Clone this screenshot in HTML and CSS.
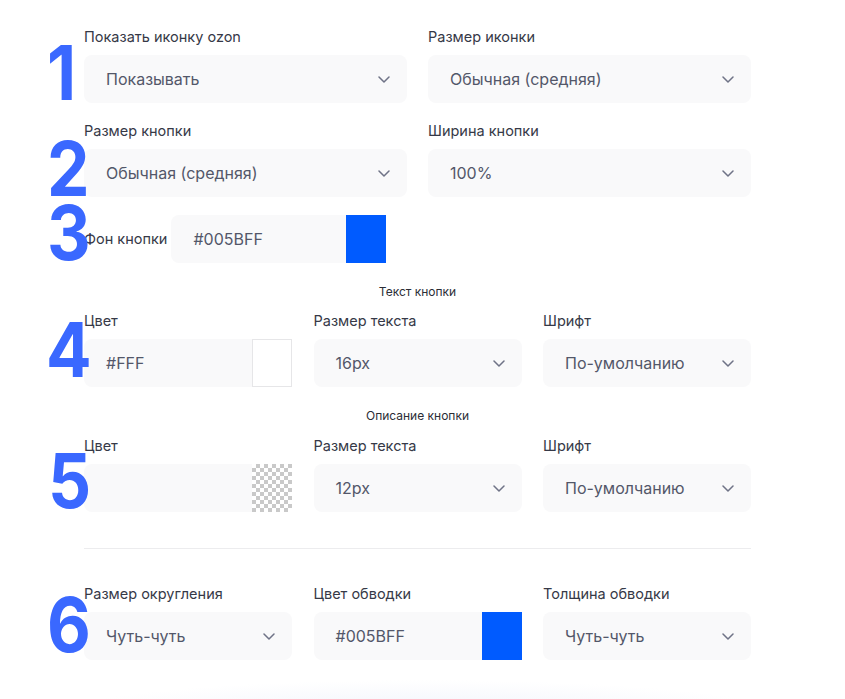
FILE: index.html
```html
<!DOCTYPE html>
<html lang="ru">
<head>
<meta charset="utf-8">
<link rel="stylesheet" href="styles.css">
</head>
<body>
<div class="page">
  <span class="num n1">1</span>
  <span class="num n2">2</span>
  <span class="num n3">3</span>
  <span class="num n4">4</span>
  <span class="num n5">5</span>
  <span class="num n6">6</span>

  <div class="grid2">
    <div class="field">
      <div class="label">Показать иконку ozon</div>
      <div class="select"><span>Показывать</span><svg class="chev" width="12" height="7" viewBox="0 0 12 7"><path d="M1 1l5 5 5-5" fill="none" stroke="#6f7386" stroke-width="1.5" stroke-linecap="round" stroke-linejoin="round"/></svg></div>
    </div>
    <div class="field">
      <div class="label">Размер иконки</div>
      <div class="select"><span>Обычная (средняя)</span><svg class="chev" width="12" height="7" viewBox="0 0 12 7"><path d="M1 1l5 5 5-5" fill="none" stroke="#6f7386" stroke-width="1.5" stroke-linecap="round" stroke-linejoin="round"/></svg></div>
    </div>
  </div>

  <div class="grid2 row2">
    <div class="field">
      <div class="label">Размер кнопки</div>
      <div class="select"><span>Обычная (средняя)</span><svg class="chev" width="12" height="7" viewBox="0 0 12 7"><path d="M1 1l5 5 5-5" fill="none" stroke="#6f7386" stroke-width="1.5" stroke-linecap="round" stroke-linejoin="round"/></svg></div>
    </div>
    <div class="field">
      <div class="label">Ширина кнопки</div>
      <div class="select"><span>100%</span><svg class="chev" width="12" height="7" viewBox="0 0 12 7"><path d="M1 1l5 5 5-5" fill="none" stroke="#6f7386" stroke-width="1.5" stroke-linecap="round" stroke-linejoin="round"/></svg></div>
    </div>
  </div>

  <div class="inline-row">
    <div class="label inline">Фон кнопки</div>
    <div class="color wide">
      <span class="color-text">#005BFF</span>
      <span class="swatch blue"></span>
    </div>
  </div>

  <div class="section-title">Текст кнопки</div>

  <div class="grid3 row4">
    <div class="field">
      <div class="label">Цвет</div>
      <div class="color">
        <span class="color-text">#FFF</span>
        <span class="swatch white"></span>
      </div>
    </div>
    <div class="field">
      <div class="label">Размер текста</div>
      <div class="select"><span>16px</span><svg class="chev" width="12" height="7" viewBox="0 0 12 7"><path d="M1 1l5 5 5-5" fill="none" stroke="#6f7386" stroke-width="1.5" stroke-linecap="round" stroke-linejoin="round"/></svg></div>
    </div>
    <div class="field">
      <div class="label">Шрифт</div>
      <div class="select"><span>По-умолчанию</span><svg class="chev" width="12" height="7" viewBox="0 0 12 7"><path d="M1 1l5 5 5-5" fill="none" stroke="#6f7386" stroke-width="1.5" stroke-linecap="round" stroke-linejoin="round"/></svg></div>
    </div>
  </div>

  <div class="section-title t2">Описание кнопки</div>

  <div class="grid3 row5">
    <div class="field">
      <div class="label">Цвет</div>
      <div class="color">
        <span class="color-text"></span>
        <span class="swatch checker"></span>
      </div>
    </div>
    <div class="field">
      <div class="label">Размер текста</div>
      <div class="select"><span>12px</span><svg class="chev" width="12" height="7" viewBox="0 0 12 7"><path d="M1 1l5 5 5-5" fill="none" stroke="#6f7386" stroke-width="1.5" stroke-linecap="round" stroke-linejoin="round"/></svg></div>
    </div>
    <div class="field">
      <div class="label">Шрифт</div>
      <div class="select"><span>По-умолчанию</span><svg class="chev" width="12" height="7" viewBox="0 0 12 7"><path d="M1 1l5 5 5-5" fill="none" stroke="#6f7386" stroke-width="1.5" stroke-linecap="round" stroke-linejoin="round"/></svg></div>
    </div>
  </div>

  <div class="divider"></div>

  <div class="grid3 row6">
    <div class="field">
      <div class="label">Размер округления</div>
      <div class="select"><span>Чуть-чуть</span><svg class="chev" width="12" height="7" viewBox="0 0 12 7"><path d="M1 1l5 5 5-5" fill="none" stroke="#6f7386" stroke-width="1.5" stroke-linecap="round" stroke-linejoin="round"/></svg></div>
    </div>
    <div class="field">
      <div class="label">Цвет обводки</div>
      <div class="color">
        <span class="color-text">#005BFF</span>
        <span class="swatch blue"></span>
      </div>
    </div>
    <div class="field">
      <div class="label">Толщина обводки</div>
      <div class="select"><span>Чуть-чуть</span><svg class="chev" width="12" height="7" viewBox="0 0 12 7"><path d="M1 1l5 5 5-5" fill="none" stroke="#6f7386" stroke-width="1.5" stroke-linecap="round" stroke-linejoin="round"/></svg></div>
    </div>
  </div>

  <div class="next-card"></div>
</div>
</body>
</html>
```

FILE: styles.css
```css
* { box-sizing: border-box; }
html, body { margin: 0; padding: 0; background: #fff; }
body {
  font-family: Inter, "Noto Sans", "Liberation Sans", sans-serif;
  color: #3b3e4d;
  overflow: hidden;
  height: 699px;
}
.page {
  position: relative;
  width: 751px;
  padding: 28px 0 0 84px;
}
.num {
  position: absolute;
  font-family: Inter, "Liberation Sans", sans-serif;
  font-weight: 700;
  font-size: 75px;
  line-height: 76px;
  color: #3a68ff;
  letter-spacing: -1px;
  transform: scaleX(0.9);
  transform-origin: left top;
  z-index: 2;
}
.n1 { left: 47px; top: 35px; }
.n2 { left: 47px; top: 131px; }
.n3 { left: 47px; top: 195px; }
.n4 { left: 46px; top: 312px; }
.n5 { left: 48px; top: 443px; }
.n6 { left: 47px; top: 587px; }

.grid2 {
  display: grid;
  grid-template-columns: 323px 323px;
  column-gap: 21px;
}
.grid3 {
  display: grid;
  grid-template-columns: 208px 208px 208px;
  column-gap: 21.5px;
}
.row2 { margin-top: 19px; }
.label {
  font-size: 14.5px;
  line-height: 18px;
  font-weight: 400;
  color: #363947;
  margin-bottom: 9px;
  white-space: nowrap;
}
.label.inline { margin: 0; }
.select {
  height: 48px;
  background: #f9f9fa;
  border-radius: 8px;
  display: flex;
  align-items: center;
  justify-content: space-between;
  padding: 0 17px 0 22px;
  font-size: 16px;
  color: #535769;
}
.chev { display: block; }
.inline-row {
  display: flex;
  align-items: center;
  gap: 4px;
  margin-top: 18px;
}
.color {
  height: 48px;
  display: flex;
  align-items: stretch;
  background: #f9f9fa;
  border-radius: 8px 0 0 8px;
  width: 208px;
}
.color.wide { width: 215px; }
.color-text {
  flex: 1;
  display: flex;
  align-items: center;
  padding-left: 22px;
  font-size: 16px;
  color: #535769;
}
.swatch { width: 40px; flex: none; }
.swatch.blue { background: #005bff; }
.swatch.white { background: #fff; border: 1px solid #e6e6e8; }
.swatch.checker {
  background-color: #fff;
  background-image:
    linear-gradient(45deg, #c9c9c9 25%, transparent 25%, transparent 75%, #c9c9c9 75%),
    linear-gradient(45deg, #c9c9c9 25%, transparent 25%, transparent 75%, #c9c9c9 75%);
  background-size: 8px 8px;
  background-position: 0 0, 4px 4px;
}
.section-title {
  text-align: center;
  font-size: 12px;
  line-height: 16px;
  color: #2b2d36;
  margin-top: 21px;
  margin-bottom: 12px;
}
.section-title.t2 { margin-bottom: 13px; }
.divider {
  height: 1px;
  background: #ececee;
  margin: 36px 0 36px;
}
.next-card {
  position: absolute;
  left: 40px;
  width: 765px;
  top: 680px;
  height: 40px;
  background: radial-gradient(ellipse 50% 100% at 50% 100%, rgba(236, 240, 250, 0.9), rgba(255, 255, 255, 0) 100%);
}
```
